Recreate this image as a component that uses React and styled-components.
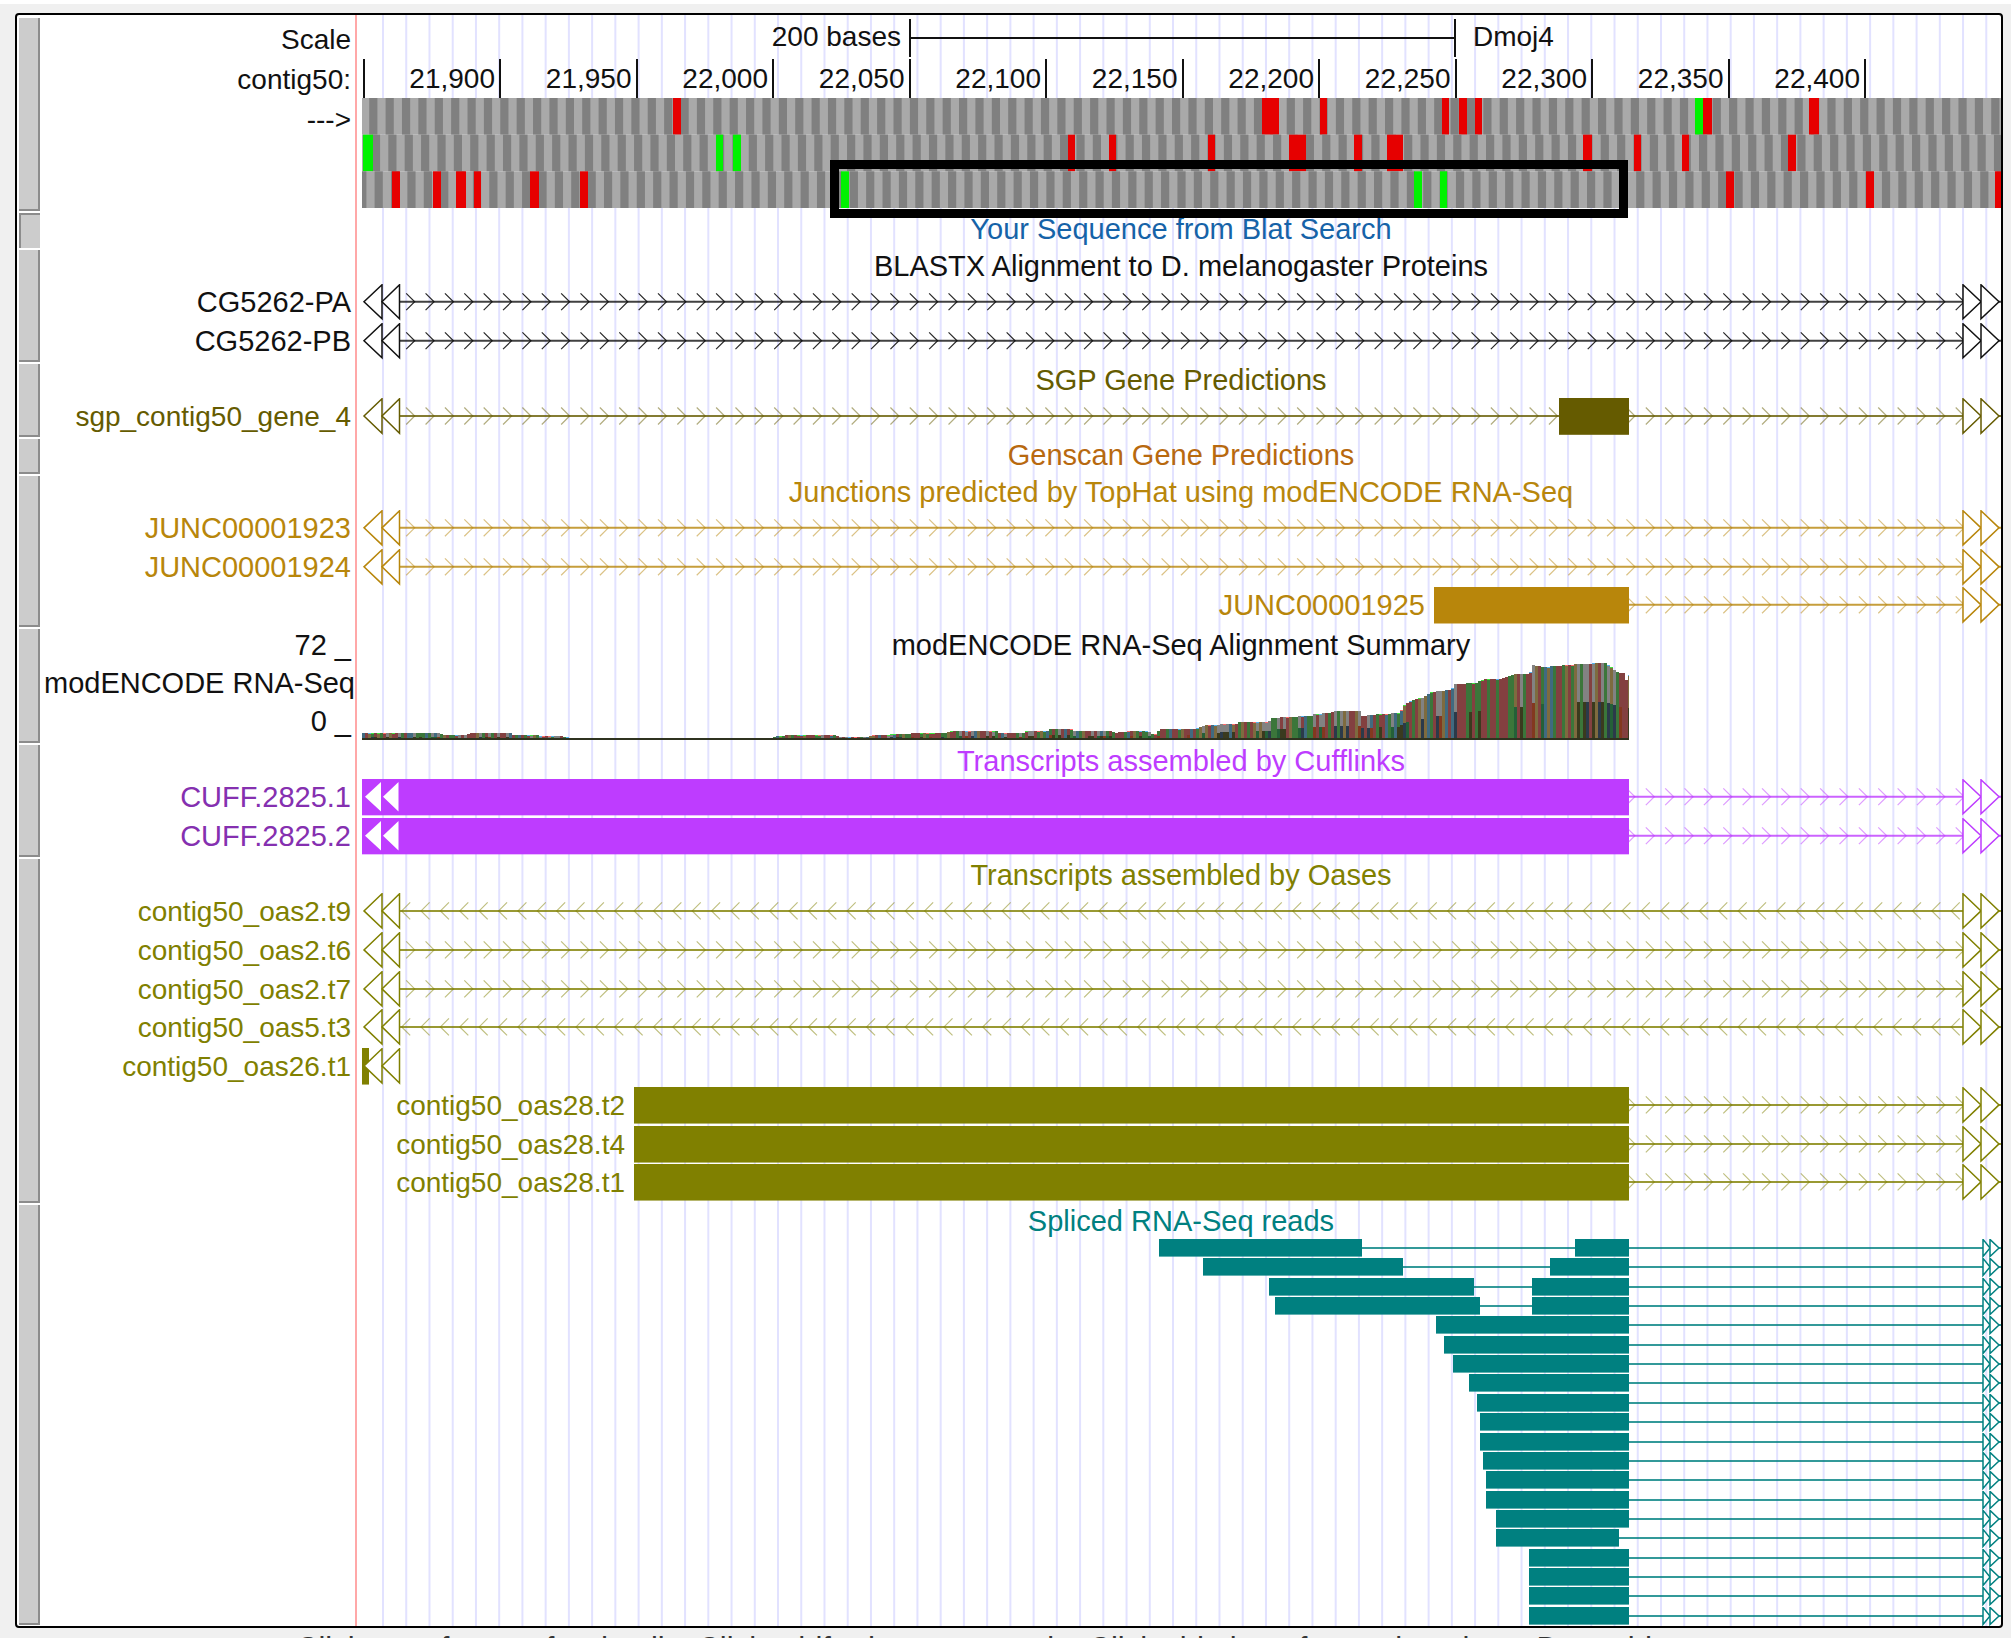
import React from "react";
import styled, { createGlobalStyle } from "styled-components";

/* Plot coordinates: every lane shares one horizontal scale. */
const PLOT_LEFT = 357;
const PLOT_WIDTH = 1644;
const DATA_START = 362;
const DATA_END = 2001;
const EXON_END = 1629;
const LANE = 39;
const MID = 18;

const pct = (x) => `${((x - PLOT_LEFT) / PLOT_WIDTH) * 100}%`;
const range = (n) => Array.from({ length: n }, (_, i) => i);

const Global = createGlobalStyle`
  * { box-sizing: border-box; }
  body { margin: 0; background: #fff; font-family: "Liberation Sans", Arial, Helvetica, sans-serif; }
`;

const Page = styled.main`
  display: flex;
  flex-direction: column;
  height: 100vh;
  overflow: hidden;
  background: #f0f0f0;
  border: solid #fff;
  border-width: 4px 4px 1px 0;
  color: #111;
  font-size: 29px;
`;

const Frame = styled.section`
  position: relative;
  flex: none;
  margin: 9px 8px 0 15px;
  background: #fff;
  border: 2px solid #000;
  border-radius: 4px;
  overflow: hidden;
`;

const Backdrop = styled.svg`
  position: absolute;
  top: 0;
  left: 340px;
  width: calc(100% - 340px);
  height: 100%;
`;

const TrackRow = styled.div`
  position: relative;
  display: flex;
  height: ${(p) => p.$height}px;
`;

const Grip = styled.button`
  flex: none;
  width: 21px;
  margin: ${(p) => (p.$first ? 3 : 1)}px 0 1px 2px;
  padding: 0;
  background: #ccc;
  border: solid #8c8c8c;
  border-width: ${(p) => (p.$pressed ? "2px 0 0 2px" : "0 2px 2px 0")};
`;

const Labels = styled.div`
  flex: none;
  width: 317px;
  padding: ${(p) => p.$top}px 4px 0 0;
  border-right: 2px solid #ffa8a8;
  display: grid;
  grid-auto-rows: ${(p) => p.$row};
  align-content: start;
  height: 100%;
  text-align: right;
  white-space: nowrap;
  font-size: ${(p) => (p.$small ? 28 : 29)}px;
  line-height: ${(p) => p.$line}px;
  color: ${(p) => p.$color || "#111"};
`;

const FlushLabel = styled.span`
  margin-right: -4px;
`;

const Plot = styled.div`
  flex: 1;
  min-width: 0;
`;

const Title = styled.h2`
  margin: 0;
  padding-left: 4px;
  height: 35px;
  line-height: 35px;
  font-size: inherit;
  font-weight: 400;
  text-align: center;
  white-space: nowrap;
  color: ${(p) => p.$color};
`;

const Lanes = styled.div`
  display: grid;
  grid-template-rows: repeat(${(p) => p.$count}, minmax(0, 1fr));
  height: ${(p) => p.$height}px;
`;

const LaneBox = styled.div`
  display: grid;
  grid-template: minmax(0, 1fr) / minmax(0, 1fr);
  min-height: 0;
  & > * { grid-area: 1 / 1; }
`;

const Drawing = styled.svg`
  display: block;
  width: 100%;
  height: ${(p) => (p.$height ? `${p.$height}px` : "100%")};
  min-height: 0;
`;

const InlineLabel = styled.span`
  width: ${(p) => p.$end};
  padding-right: 9px;
  font-size: ${(p) => (p.$small ? 28 : 29)}px;
  line-height: 37px;
  text-align: right;
  white-space: nowrap;
  color: ${(p) => p.$color};
`;

const ScaleRow = styled.div`
  display: grid;
  grid-template-columns: minmax(0, 552fr) minmax(0, 547fr) minmax(0, 545fr);
  height: 38px;
  margin-top: 4px;
  font-size: 28px;
  line-height: 36px;
  white-space: nowrap;
`;

const ScaleCell = styled.div`
  padding: 0 8px 0 17px;
  text-align: ${(p) => p.$align};
`;

const ScaleBar = styled.div`
  display: flex;
  align-items: center;
  border: solid #111;
  border-width: 0 2px;
`;

const ScaleLine = styled.div`
  flex: 1;
  height: 2px;
  background: #111;
`;

const TickRow = styled.div`
  display: grid;
  grid-template-columns: minmax(0, 8fr) minmax(0, 136fr) repeat(10, minmax(0, 136.5fr)) minmax(0, 135fr);
  height: 37px;
  margin: 2px 0;
  font-size: 28px;
  line-height: 40px;
`;

const Tick = styled.div`
  padding-right: 4px;
  border-right: 2px solid #111;
  text-align: right;
  white-space: nowrap;
`;

const CodonMap = styled.div`
  position: relative;
  height: 110px;
`;

const Highlight = styled.div`
  position: absolute;
  z-index: 2;
  top: 62px;
  left: ${(p) => p.$left};
  width: ${(p) => p.$width};
  height: 58px;
  border: 9px solid #000;
`;

const Hint = styled.p`
  flex: none;
  margin: 0;
  padding: 3px 0 0 296px;
  font-size: 31px;
  line-height: 35px;
  white-space: nowrap;
  color: #333;
`;

const viewBox = (h) => `${PLOT_LEFT} 0 ${PLOT_WIDTH} ${h}`;

function Gridlines() {
  return (
    <Backdrop viewBox={viewBox(1)} preserveAspectRatio="none" aria-hidden="true">
      {range(70).map((i) => (
        <rect key={i} x={382 + i * 23.236} y="0" width="2" height="1" fill="#e2e2ff" />
      ))}
    </Backdrop>
  );
}

const CODON = 8.192;
const codonRows = [
  {
    dark: 369.2,
    stops: [[673, 681], [1262, 1279], [1320, 1327], [1442, 1449], [1459, 1467], [1475, 1482], [1703, 1712], [1809, 1819]],
    starts: [[1695, 1703]],
  },
  {
    dark: 371.9,
    stops: [[1068, 1075], [1109, 1116], [1208, 1215], [1289, 1306], [1354, 1362], [1387, 1403], [1583, 1592], [1634, 1641], [1682, 1689], [1788, 1796]],
    starts: [[363, 373], [716, 723], [733, 741]],
  },
  {
    dark: 374.6 - 2 * CODON,
    stops: [[392, 400], [433, 441], [456, 466], [474, 481], [530, 539], [580, 588], [1726, 1734], [1866, 1874], [1995, 2001]],
    starts: [[841, 849], [1414, 1422], [1440, 1447]],
  },
];

function Codons() {
  const h = 110 / 3;
  return (
    <Drawing viewBox={viewBox(110)} preserveAspectRatio="none" role="img" aria-label="Reading frames">
      {codonRows.map((row, r) => {
        const y = r * h;
        return (
          <g key={r}>
            <rect x={DATA_START} y={y} width={DATA_END - DATA_START} height={h} fill="#a9a9a9" />
            {range(101).map((i) => {
              const x = Math.max(DATA_START, row.dark + i * 2 * CODON);
              const end = Math.min(DATA_END, row.dark + i * 2 * CODON + CODON);
              return end > x ? <rect key={i} x={x} y={y} width={end - x} height={h} fill="#808080" /> : null;
            })}
            {row.stops.map(([a, b]) => (
              <rect key={a} x={a} y={y} width={b - a} height={h} fill="#e60000" />
            ))}
            {row.starts.map(([a, b]) => (
              <rect key={a} x={a} y={y} width={b - a} height={h} fill="#00f200" />
            ))}
          </g>
        );
      })}
    </Drawing>
  );
}

function Triangle({ base, tip, color }) {
  return (
    <path
      d={`M${base} 0.8V35.2L${tip} ${MID}Z`}
      fill="#fff"
      stroke={color}
      strokeWidth="1.5"
      vectorEffect="non-scaling-stroke"
    />
  );
}

function Feature({ color, strand, blocks = [], from = 400, line = true, left, compact, solid }) {
  const chevrons = [];
  if (strand) {
    for (let i = 0; i <= 80; i += 1) {
      const x = strand === "+" ? 406.2 + i * 19.369 : 410.2 + i * 19.369;
      const tip = strand === "+" ? x + 8.5 : x - 8.5;
      if (x > from - 4 && x < 1962) chevrons.push(`M${x} 9.5L${tip} ${MID}L${x} 26.5`);
    }
  }
  return (
    <Drawing viewBox={viewBox(LANE)} preserveAspectRatio="none" aria-hidden="true">
      {line && (
        <line x1={from} x2={DATA_END} y1={MID} y2={MID} stroke={color} strokeOpacity="0.8" strokeWidth="2" vectorEffect="non-scaling-stroke" />
      )}
      {strand && <path d={chevrons.join("")} fill="none" stroke={color} strokeOpacity={color === "#111" ? 0.9 : 0.5} strokeWidth="1.2" />}
      {blocks.map(([a, b]) => (
        <rect key={a} x={a} y="0" width={b - a} height={compact ? 35.5 : 36.8} fill={color} />
      ))}
      {left && !solid && (
        <>
          <Triangle base={382} tip={364} color={color} />
          <Triangle base={399.5} tip={382} color={color} />
        </>
      )}
      {solid && <path d={`M381 3V33L365 ${MID}ZM398.5 3V33L383 ${MID}Z`} fill="#fff" />}
      {line && !compact && (
        <>
          <Triangle base={1963} tip={1981} color={color} />
          <Triangle base={1981} tip={1999} color={color} />
        </>
      )}
      {line && compact && (
        <>
          <Triangle base={1983} tip={1990} color={color} />
          <Triangle base={1990} tip={1999} color={color} />
        </>
      )}
    </Drawing>
  );
}

const coverage = [
  [362, 733], [440, 733], [443, 735], [467, 735], [470, 733], [510, 733], [514, 735], [562, 736], [573, 739],
  [574, 740], [771, 740], [772, 737], [790, 735], [835, 735], [840, 737], [868, 737], [872, 735], [905, 734],
  [915, 733], [945, 733], [950, 731], [995, 731], [1000, 733], [1022, 733], [1026, 731], [1048, 731], [1050, 729],
  [1070, 729], [1075, 731], [1110, 731], [1115, 733], [1130, 731], [1148, 731], [1154, 735], [1160, 729], [1195, 729],
  [1205, 725], [1235, 724], [1240, 722], [1268, 722], [1272, 718], [1285, 717], [1310, 716], [1315, 714],
  [1330, 713], [1333, 711], [1361, 711], [1362, 716], [1380, 714], [1399, 713], [1403, 706], [1410, 701],
  [1424, 697], [1430, 692], [1450, 690], [1455, 684], [1475, 683], [1485, 679], [1500, 679], [1515, 674],
  [1529, 674], [1533, 665], [1543, 667], [1556, 666], [1565, 665], [1580, 664], [1605, 663], [1611, 667], [1616, 672],
  [1624, 673], [1626, 680], [1629, 675],
];

function coverageAt(x) {
  let i = 1;
  while (i < coverage.length - 1 && coverage[i][0] < x) i += 1;
  const [x0, y0] = coverage[i - 1];
  const [x1, y1] = coverage[i];
  return Math.round(y0 + ((x - x0) / (x1 - x0)) * (y1 - y0)) - 663;
}

const topColors = ["#834040", "#3b763a", "#828282", "#834040", "#3b763a", "#406a80", "#828282", "#7e6b3f", "#834040"];
const lowColors = ["#3a3a1e", "#246038", "#83381f", "#3a3a1e", "#2b3a4a"];
const capColors = ["#ff6b6b", "#3fe23f", "#55b4ee"];

function Coverage() {
  const bars = [];
  let seed = 7;
  const next = (n) => {
    seed = (seed * 1103515245 + 12345) % 2147483648;
    return Math.floor((seed / 2147483648) * n);
  };
  for (let x = DATA_START; x < EXON_END; x += 3) {
    const y = coverageAt(x + 1);
    if (y < 76) {
      const pick = next(topColors.length);
      const w = Math.min(3, EXON_END - x);
      bars.push(<rect key={x} x={x} y={y} width={w} height={77 - y} fill={topColors[pick]} />);
      if (topColors[pick] === "#828282" || next(5) === 0) {
        const mid = Math.round(77 - (77 - y) * 0.5);
        bars.push(<rect key={`l${x}`} x={x} y={mid} width={w} height={77 - mid} fill={lowColors[next(lowColors.length)]} />);
      }
      if (next(6) === 0) bars.push(<rect key={`c${x}`} x={x} y={y} width={w} height="1" fill={capColors[next(3)]} />);
    }
  }
  return (
    <Drawing $height={81} viewBox={viewBox(81)} preserveAspectRatio="none" role="img" aria-label="RNA-Seq coverage">
      <g shapeRendering="crispEdges">{bars}</g>
      <rect x={DATA_START} y="75" width={EXON_END - DATA_START} height="2" fill="#2f3320" />
    </Drawing>
  );
}

const OLIVE = "#808000";
const GOLD = "#b8860b";
const VIOLET = "#be3cff";
const TEAL = "#008080";
const SGP = "#655b00";

const tracks = [
  { name: "Your Sequence from Blat Search", color: "#1663a8", height: 37, pressed: true },
  {
    name: "BLASTX Alignment to D. melanogaster Proteins", color: "#111", height: 114, body: 77,
    items: [
      { label: "CG5262-PA", strand: "+", left: true },
      { label: "CG5262-PB", strand: "+", left: true },
    ],
  },
  {
    name: "SGP Gene Predictions", color: SGP, height: 75, body: 39, small: true,
    items: [{ label: "sgp_contig50_gene_4", strand: "+", left: true, blocks: [[1559, EXON_END]] }],
  },
  { name: "Genscan Gene Predictions", color: "#b8690f", height: 37 },
  {
    name: "Junctions predicted by TopHat using modENCODE RNA-Seq", color: GOLD, height: 153, body: 116,
    items: [
      { label: "JUNC00001923", strand: "+", left: true },
      { label: "JUNC00001924", strand: "+", left: true },
      { inline: "JUNC00001925", strand: "+", from: EXON_END, blocks: [[1434, EXON_END]] },
    ],
  },
  { name: "modENCODE RNA-Seq Alignment Summary", color: "#111", height: 116, wiggle: true },
  {
    name: "Transcripts assembled by Cufflinks", color: VIOLET, labelColor: "#8530b0", height: 114, body: 77,
    items: [
      { label: "CUFF.2825.1", strand: "+", from: EXON_END, solid: true, blocks: [[DATA_START, EXON_END]] },
      { label: "CUFF.2825.2", strand: "+", from: EXON_END, solid: true, blocks: [[DATA_START, EXON_END]] },
    ],
  },
  {
    name: "Transcripts assembled by Oases", color: OLIVE, height: 346, body: 310, small: true,
    items: [
      { label: "contig50_oas2.t9", strand: "-", left: true },
      { label: "contig50_oas2.t6", strand: "+", left: true },
      { label: "contig50_oas2.t7", strand: "+", left: true },
      { label: "contig50_oas5.t3", strand: "-", left: true },
      { label: "contig50_oas26.t1", left: true, line: false, blocks: [[DATA_START, 369]] },
      { inline: "contig50_oas28.t2", strand: "+", from: EXON_END, blocks: [[634, EXON_END]] },
      { inline: "contig50_oas28.t4", strand: "+", from: EXON_END, blocks: [[634, EXON_END]] },
      { inline: "contig50_oas28.t1", strand: "+", from: EXON_END, blocks: [[634, EXON_END]] },
    ],
  },
  {
    name: "Spliced RNA-Seq reads", color: TEAL, height: 422, body: 387,
    items: [
      [[1159, 1362], [1575, 1629]],
      [[1203, 1403], [1550, 1629]],
      [[1269, 1474], [1532, 1629]],
      [[1275, 1480], [1532, 1629]],
      [[1436, 1629]], [[1444, 1629]], [[1453, 1629]], [[1469, 1629]], [[1477, 1629]],
      [[1480, 1629]], [[1480, 1629]], [[1483, 1629]], [[1486, 1629]], [[1486, 1629]],
      [[1496, 1629]], [[1496, 1619]], [[1529, 1629]], [[1529, 1629]], [[1529, 1629]], [[1529, 1629]],
    ].map((blocks) => ({ blocks, from: blocks[0][0], compact: true })),
  },
];

const ticks = ["", "21,900", "21,950", "22,000", "22,050", "22,100", "22,150", "22,200", "22,250", "22,300", "22,350", "22,400"];

function Ruler() {
  return (
    <TrackRow $height={197}>
      <Grip $first type="button" aria-label="Base position options" />
      <Labels $top={5} $row="40px" $line={40} $small>
        <span>Scale</span>
        <span>contig50:</span>
        <span>{"--->"}</span>
      </Labels>
      <Plot>
        <ScaleRow>
          <ScaleCell $align="right">200 bases</ScaleCell>
          <ScaleBar><ScaleLine /></ScaleBar>
          <ScaleCell $align="left">Dmoj4</ScaleCell>
        </ScaleRow>
        <TickRow>
          {ticks.map((t) => <Tick key={t}>{t}</Tick>)}
        </TickRow>
        <CodonMap>
          <Codons />
          <Highlight $left={pct(829.5)} $width={`${(798.5 / PLOT_WIDTH) * 100}%`} />
        </CodonMap>
      </Plot>
    </TrackRow>
  );
}

function Track({ track }) {
  const { name, color, labelColor, height, body, items = [], pressed, wiggle, small } = track;
  const labels = items.filter((it) => it.label);
  return (
    <TrackRow $height={height}>
      <Grip type="button" $pressed={pressed} aria-label={`${name} options`} />
      {wiggle ? (
        <Labels $top={0} $row="38px" $line={35}>
          <span>72 _</span>
          <FlushLabel>modENCODE RNA-Seq</FlushLabel>
          <span>0 _</span>
        </Labels>
      ) : (
        <Labels
          $top={35}
          $row={labels.length ? `${body / items.length}px` : "auto"}
          $line={37}
          $small={small}
          $color={labelColor || color}
        >
          {labels.map((it) => <span key={it.label}>{it.label}</span>)}
        </Labels>
      )}
      <Plot>
        <Title $color={color}>{name}</Title>
        {wiggle && <Coverage />}
        {items.length > 0 && (
          <Lanes $count={items.length} $height={body}>
            {items.map((it, i) => (
              <LaneBox key={i}>
                <Feature color={color} {...it} />
                {it.inline && (
                  <InlineLabel $end={pct(it.blocks[0][0])} $color={color} $small={small}>{it.inline}</InlineLabel>
                )}
              </LaneBox>
            ))}
          </Lanes>
        )}
      </Plot>
    </TrackRow>
  );
}

export default function App() {
  return (
    <Page>
      <Global />
      <Frame aria-label="Genome browser">
        <Gridlines />
        <Ruler />
        {tracks.map((t) => <Track key={t.name} track={t} />)}
      </Frame>
      <Hint>
        Click on a feature for details. Click+shift+drag to zoom in. Click side bars for track options. Drag side
      </Hint>
    </Page>
  );
}
